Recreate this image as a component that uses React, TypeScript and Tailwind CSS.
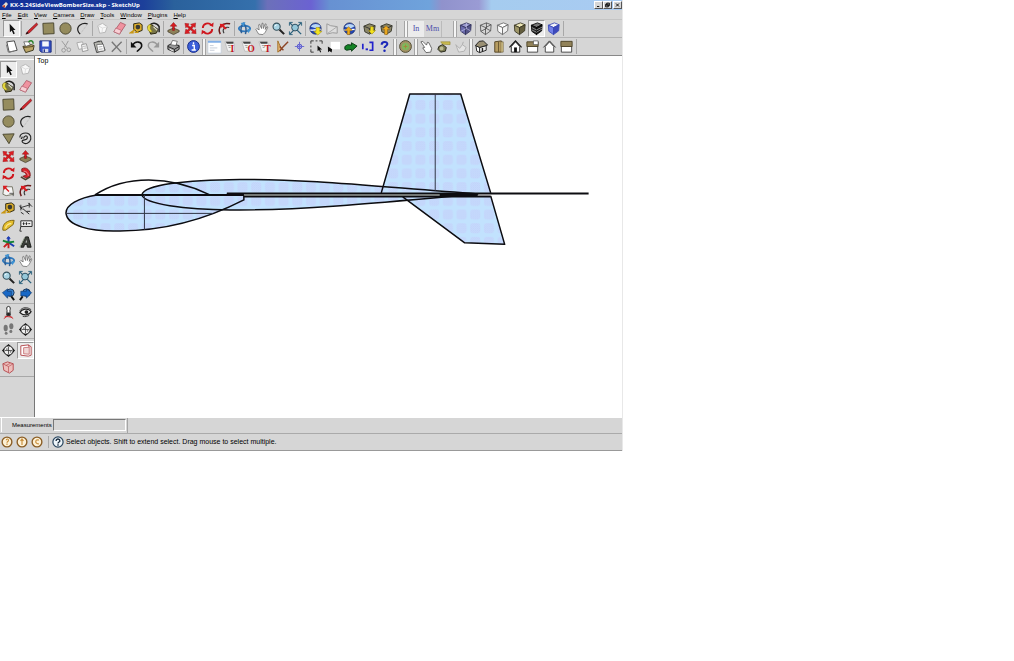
import type { ReactNode } from "react";
import clsx from "clsx";

// every icon is drawn on a 16 x 16 grid
const cube = (top: string, left: string, right: string, line: string) => (
	<g stroke={line} strokeWidth=".9" strokeLinejoin="round">
		<path d="M2.500 4.500 9 2l5 2-6 3z" fill={top} />
		<path d="M2.500 4.500 8 7v7.500L3 11z" fill={left} />
		<path d="M14 4 8 7v7.500l5.500-4z" fill={right} />
	</g>
);
const compass = (
	<>
		<path d="M8 1 15 8l-7 7-7-7z" fill="#111" />
		<circle cx="8" cy="8" r="5" fill="#eee" stroke="#111" />
		<path d="M8 4v8M4 8h8" stroke="#333" strokeWidth=".8" />
		<path d="M5.500 6.500h1.500M9.500 9.500h1.500" stroke="#333" />
	</>
);
const sheetLetter = (letter: string) => (
	<>
		<path d="M1 3h9l1 3v7H4z" fill="#f4f4f4" stroke="#aaa" strokeWidth=".6" />
		<path d="M2 3h8v2H3z" fill="#444" />
		<path d="M4 7h3M5 9h2" stroke="#888" strokeWidth=".8" />
		<text x="7" y="14" fontSize="10" fontWeight="bold" fill="#c4141c" fontFamily="Liberation Serif, serif">
			{letter}
		</text>
	</>
);
const magnifier = (
	<>
		<path d="m9 9 5 5" stroke="#222" strokeWidth="2.200" />
		<circle cx="6" cy="6" r="3.800" fill="#a9d4e4" stroke="#33505c" strokeWidth="1.200" />
		<path d="M4 5.500 6 4" stroke="#fff" />
	</>
);
const barrel = (
	<>
		<path d="M2 5.500 8 3l6 2-1 6-5 3-5-2.500z" fill="#8a8568" stroke="#3a3a2c" />
		<path d="M2 5.500 8 8l6-3M8 8v5" stroke="#333" fill="none" />
	</>
);
const globe = (
	<>
		<circle cx="8" cy="8" r="6" fill="#2347b8" stroke="#17285e" strokeWidth=".8" />
		<path d="M3 6c3-4 8-3 10.500-.5L9 8z" fill="#b9d7f5" />
		<path d="M2.500 9.500c4 1 8-1 11-.5" stroke="#fff" strokeWidth="1.500" fill="none" />
	</>
);

const icons: Record<string, ReactNode> = {
	select: <path d="m6 3 .3 9 2-2 1.700 4 1.500-.7-1.700-3.800h2.500z" fill="#111" />,
	pencil: (
		<>
			<path d="m13.500 2-9 8.500L2 14l4-1.500 8.500-8.500z" fill="#d3262c" stroke="#6d1115" strokeWidth=".7" />
			<path d="m2 14 1.200-2.500L5 13z" fill="#111" />
		</>
	),
	square: <path d="M2 2.500 13.500 2l.5 11.500L2.500 14z" fill="#958c5e" stroke="#4a4630" />,
	circle: <circle cx="8" cy="8" r="6" fill="#958c5e" stroke="#4a4630" />,
	triangle: <path d="M2 3.500 14 3 8.500 13.500z" fill="#958c5e" stroke="#4a4630" />,
	arc: (
		<>
			<path d="M13.500 3C7 1.500 2 5.500 3 10c.3 1.500 1 2.500 2.500 4" fill="none" stroke="#222" strokeWidth="1.300" />
			<path d="M13.500 3 5.500 14" stroke="#999" strokeWidth=".6" strokeDasharray="1 1" />
		</>
	),
	freehand: (
		<path
			d="M2 7C2 2 9 1 12 3.500s2 8-2 9.500-7-2-5-3 5 0 5-3-4-2-4 1M3 8c1 0 2-1 1-2"
			fill="none"
			stroke="#222"
			strokeWidth="1.200"
		/>
	),
	component: (
		<>
			<path d="m3 5 5-2.500L13 6l-2 6-6 1z" fill="#f8f8f8" stroke="#aaa" strokeWidth=".8" />
			<path d="m3 5 5 2.500 5-1.500M8 7.500 7.500 12" fill="none" stroke="#ddd" />
		</>
	),
	eraser: (
		<>
			<path d="M9 1.500 14.500 4 8 14l-6-2.500z" fill="#f0929f" stroke="#a44f5c" strokeWidth=".8" />
			<path d="m2 11.500 2-4 6 2.500L8 14z" fill="#f8cfd4" stroke="#a44f5c" strokeWidth=".6" />
		</>
	),
	tape: (
		<>
			<path d="m5 3 6-1 3 2v6l-5 2-4-3z" fill="#dcae2c" stroke="#2c2714" />
			<circle cx="9.500" cy="6.500" r="2.500" fill="#3b3b32" />
			<path d="M6 9.500 2 12.500h3M10 12H6" stroke="#c99713" strokeWidth="1.800" fill="none" />
		</>
	),
	paint: (
		<>
			<path d="M2 6 6 4l7 5-2 4-6 1z" fill="#77744a" stroke="#28230c" />
			<path d="M4 5c2-4 8-3 10 1v6" fill="none" stroke="#222" strokeWidth="1.600" />
			<path d="M3 4c-3 3-1 7 2 8l2-1C4 9 4 6 6 4z" fill="#e6d83e" stroke="#6f6618" strokeWidth=".5" />
			<path d="m8 6 4 4" stroke="#d9d9c8" strokeWidth="1.500" />
		</>
	),
	push: (
		<>
			<path d="m2 10 6-2.500 6 2.500v1.500L8 14.500l-6-3z" fill="#8d8159" stroke="#403a27" strokeWidth=".8" />
			<path d="M8 1.500 11.500 5.500H9V10H7V5.500H4.500z" fill="#d91b20" stroke="#7f0c10" strokeWidth=".5" />
		</>
	),
	// four arrows pointing away from the middle, turned a little
	move: (
		<g fill="#dc1d23" stroke="#8d1216" strokeWidth=".4">
			<path d="m2 2.500 4.500.5-1 1.500L8 7 7 8.500 4 6 3 7.500z" />
			<path d="m13.500 2-.5 5-1.500-1.200L8.500 9 7 7.500l2.500-3L8 3.500z" />
			<path d="m14 13.500-5-.5 1.200-1.500L7.500 8.500 9 7.500l3 2.500 1.500-1.500z" />
			<path d="m2 13.500 1-5 1.500 1.200L7.500 7 9 8.500l-3 3L7.500 13z" />
		</g>
	),
	rotate: (
		<>
			<path d="M3 7.500c0-5 6.500-6.500 9-3M13 8.500c0 5-6.500 6.500-9 3" fill="none" stroke="#cf161d" strokeWidth="2" />
			<path d="m14.500 1.500-.5 5-4-2zM1.500 14.500l.5-5 4 2z" fill="#cf161d" />
		</>
	),
	followMe: (
		<>
			<path d="M4 3c5-3 10 2 9 8l-4 2-4-2 4-1.500C8 7 6 6 4 6z" fill="#d9232a" stroke="#71171a" strokeWidth=".8" />
			<path d="M6 5.500c3 0 5 2 5 5" fill="none" stroke="#f0b0b0" strokeWidth=".8" />
			<path d="m3 11.500 5 3 5-3" fill="none" stroke="#4e3f2c" strokeWidth="1.500" />
		</>
	),
	scale: (
		<>
			<path d="M3 4h9l1.500 8-8 1.500L2 12z" fill="#f4f4f4" stroke="#665" strokeWidth=".9" />
			<path d="M2 3h5L5.500 5 9 8.500 8 9.500 4.500 6 3 7.500z" fill="#d91b20" />
			<path d="M9 11h4v3" stroke="#555" fill="none" />
		</>
	),
	offset: (
		<>
			<path d="M3.500 14C0 7 5 1 14 3" fill="none" stroke="#6a1a1a" strokeWidth="1.600" />
			<path d="M7.500 13C5 9 8 6 13 7" fill="none" stroke="#333" strokeWidth="1.100" />
			<path d="m3 3 6 .5L7.500 5l3 3-2 1-3-3L4 8z" fill="#d91b20" />
		</>
	),
	orbit: (
		<>
			<ellipse cx="8" cy="8" rx="6" ry="3" fill="none" stroke="#2f78bd" strokeWidth="2" />
			<path d="M5 13C3 9 5 4 7 2.500 10 6 10 11 9 14" fill="none" stroke="#2c5f96" strokeWidth="1.600" />
			<path d="m9 1-5 1 3 4zM11 8l4 1-3 4z" fill="#3f92d2" />
		</>
	),
	pan: (
		<path
			d="M5 14 2 9l1-1 2.500 1.500L5 4l1-.5L8 8l.5-5.500 1-.3L10 8l2-5 1 .3L12 9l2-3 .8.600L12 12l-2.500 2.500z"
			fill="#fff"
			stroke="#555"
			strokeWidth=".7"
		/>
	),
	zoom: magnifier,
	extents: (
		<>
			<path d="m2 2 12 12M14 2 2 14" stroke="#2d627d" strokeWidth="1.500" />
			<circle cx="7.500" cy="7" r="3.600" fill="#96c8da" stroke="#29495b" />
			<path d="M1.500 5V1.500H5M11 1.500h3.500V5M1.500 11v3.500H5" fill="none" stroke="#2d627d" />
		</>
	),
	zoomPrev: (
		<>
			<circle cx="10" cy="6" r="4" fill="#3b83d0" stroke="#173356" />
			<path d="M1.500 6 7 2v2.500h4v5H7V12z" fill="#1868c6" stroke="#123a6c" strokeWidth=".7" />
			<path d="m11 10 3 4" stroke="#111" strokeWidth="2" />
		</>
	),
	zoomNext: (
		<>
			<circle cx="9" cy="6" r="4" fill="#3b83d0" stroke="#173356" />
			<path d="M14.500 6 9 2v2.500H3v5h6V12z" fill="#1868c6" stroke="#123a6c" strokeWidth=".7" />
			<path d="m5 10-3 4" stroke="#111" strokeWidth="2" />
		</>
	),
	getView: (
		<>
			{globe}
			<path d="M8.500 7h4v4H15l-4.500 4L6 11h2.500z" fill="#f2e21d" stroke="#a18b0c" strokeWidth=".5" />
		</>
	),
	terrain: (
		<>
			<path d="m2 3 4 2 7 1v7l-5-.5L2 14z" fill="#ddd" stroke="#999" />
			<path d="M13 6 3 13" stroke="#aaa" />
		</>
	),
	placeModel: (
		<>
			{globe}
			<path d="M5.500 14.500V10H3l4-4 4 4H8.500v4.500z" fill="#eba91c" stroke="#85570b" strokeWidth=".5" />
		</>
	),
	getModels: (
		<>
			{barrel}
			<path d="M9 6h3v4h2.500L10.500 14 7 10h2z" fill="#f3e11b" stroke="#94810a" strokeWidth=".5" />
		</>
	),
	shareModels: (
		<>
			{barrel}
			<path d="M6 14.500V9H3.500L7.500 5l4 4H9v5.500z" fill="#efab1f" stroke="#85570b" strokeWidth=".5" />
		</>
	),
	xray: (
		<>
			{cube("#9c9cd0", "#6c6cae", "#55558a", "#32325c")}
			<path d="M9 2v6l4.500 2.500M9 8l-6 3" fill="none" stroke="#c4c4ea" strokeWidth=".7" />
		</>
	),
	wire: (
		<path
			d="M2.500 4.500 9 2l5 2-6 3zM2.500 4.500 3 11l5 3.500V7M14 4l-.5 6.500L8 14.500M9 2v6l4.500 2.500M9 8l-6 3"
			fill="none"
			stroke="#444"
			strokeWidth=".8"
		/>
	),
	hidden: cube("#fff", "#fafafa", "#f0f0f0", "#666"),
	shaded: cube("#ece6b6", "#9d9567", "#635d3e", "#35321f"),
	textured: (
		<>
			{cube("#777", "#222", "#111", "#000")}
			<path d="m3 7 5 2.500 6-3M3 9.500 8 12l6-3.500" fill="none" stroke="#aaa" strokeWidth=".8" />
		</>
	),
	mono: cube("#f3f3f8", "#7280e8", "#3d49bc", "#3647b5"),
	newFile: (
		<>
			<path d="M3 3 11 2l3 10-8.500 2z" fill="#fff" stroke="#333" strokeWidth=".9" />
			<path d="m2.500 6 2 8 6-1" fill="none" stroke="#777" />
		</>
	),
	open: (
		<>
			<path d="m2 8 9-2 3 1-1 5-8 2.500z" fill="#bba568" stroke="#3b351d" />
			<path d="M3 3h5l2 3-5 2z" fill="#fff" stroke="#444" strokeWidth=".7" />
			<path d="M8 3c3-2 5-1 5 2" stroke="#258025" fill="none" strokeWidth="1.500" />
			<path d="m3 9 10-1" stroke="#53451c" />
		</>
	),
	save: (
		<>
			<path d="M2 2h12v12H3.500L2 12.500z" fill="#3652c8" stroke="#1c2c7c" />
			<path d="M4.500 2.500h7V8h-7z" fill="#f4f6fb" />
			<path d="M5 10.500h6V14H5z" fill="#d9dcec" />
			<path d="M6 11h1.500v3H6z" fill="#243584" />
		</>
	),
	cut: (
		<>
			<path d="m4 2 6 8M11 2 7 9" stroke="#999" fill="none" />
			<circle cx="6" cy="12" r="2" fill="none" stroke="#999" />
			<circle cx="11.500" cy="11.500" r="2" fill="none" stroke="#999" />
		</>
	),
	copy: (
		<>
			<path d="m2 4 6-1 2 7-6 1z" fill="#f5f5f5" stroke="#aaa" />
			<path d="m7 6 5-1 2 7-6 1.500z" fill="#f5f5f5" stroke="#999" />
			<path d="m8 8 4-.5M9 10l3.500-.5" stroke="#bbb" />
		</>
	),
	paste: (
		<>
			<path d="m2 4 8-2 4 10-9 2.500z" fill="#b9b9b2" stroke="#444" />
			<path d="m5 6 7-.5 1.500 7-7 1z" fill="#fff" stroke="#555" strokeWidth=".7" />
			<path d="M7 8.500 11 8M7.500 11l4-.5" stroke="#999" strokeWidth=".8" />
			<path d="m4.500 3 3-1.500 1 2z" fill="#444" />
		</>
	),
	remove: <path d="m3 3 10 11M13.500 3 3 13.500" stroke="#777" strokeWidth="1.500" />,
	undo: (
		<>
			<path d="M3.500 7C7 1 14 3 13.500 7.500 13 11 10 11 8.500 13.500" fill="none" stroke="#111" strokeWidth="1.700" />
			<path d="M2 3v6h6z" fill="#111" />
		</>
	),
	redo: (
		<>
			<path d="M12.500 7C9 1 2 3 2.500 7.500 3 11 6 11 7.500 13.500" fill="none" stroke="#999" strokeWidth="1.500" />
			<path d="M14 3v6H8z" fill="#999" />
		</>
	),
	print: (
		<>
			<path d="m2 7 4-2 8 2v4l-5 3-7-3z" fill="#999" stroke="#222" />
			<path d="m5 6 2-4.500 5 1L10.500 7z" fill="#fff" stroke="#444" strokeWidth=".7" />
			<path d="m2 8 7 3 5-3M9 11v3" fill="none" stroke="#222" />
			<path d="m4 11 4 2" stroke="#fff" />
		</>
	),
	info: (
		<>
			<circle cx="8" cy="8" r="6.300" fill="#3b5fd9" stroke="#162a83" />
			<path d="M6.500 7h2.300v4.500M6 11.800h4.500M8 3.500v2" stroke="#fff" strokeWidth="1.500" fill="none" />
		</>
	),
	page: (
		<>
			<path d="M1 2h14v13H1z" fill="#fff" stroke="#bccbdd" strokeWidth=".6" />
			<path d="M1 2h14v2H1z" fill="#82afe6" />
			<path d="M3 7h4M3 9.500h8M3 12h5" stroke="#c4ccd8" />
		</>
	),
	textI: sheetLetter("I"),
	textO: sheetLetter("O"),
	textT: sheetLetter("T"),
	sketch: (
		<>
			<path d="M3 2v12l4-3z" fill="#e4b977" stroke="#a37127" />
			<path d="m14 3-6 6-3 4M5 8l4 4" stroke="#8c4425" strokeWidth="1.500" fill="none" />
		</>
	),
	target: (
		<>
			<circle cx="8" cy="8" r="2.500" fill="#a6a6ee" stroke="#5a5ac8" />
			<path d="M8 3v10M3 8h10" stroke="#6a6ad0" />
		</>
	),
	marquee: (
		<>
			<path d="M2 5V2h3M11 2h3v3M2 11v3h3M7 2h2M2 7v2" stroke="#333" fill="none" />
			<path d="m9 7 .2 6 1.500-1.300 1.300 2.800 1-.6-1.200-2.700H14z" fill="#111" />
		</>
	),
	whiteSel: (
		<>
			<path d="M5 3h10v8H5z" fill="#fff" />
			<path d="m2 8 .2 6 1.500-1.300 2.300 1.800.5-3.500z" fill="#111" />
		</>
	),
	greenArrow: <path d="m2 8 3-2 4 .5V4l6 3.500L9 13v-2l-5 1-2-1z" fill="#148326" stroke="#0b3713" />,
	brackets: (
		<>
			<path d="M3 5v6M10 3.500h3.500V12H10" fill="none" stroke="#2424cc" strokeWidth="1.800" />
			<path d="M6 11h2.500" stroke="#2424cc" strokeWidth="2" />
		</>
	),
	help: (
		<>
			<path d="M5 6c0-4 6.500-3.500 6-.5-.3 2-3 2-3 4" fill="none" stroke="#1b27b8" strokeWidth="2.200" />
			<circle cx="8" cy="12.500" r="1.300" fill="#1b27b8" />
		</>
	),
	ring: (
		<>
			<circle cx="8" cy="8" r="6.300" fill="#a09263" stroke="#504b33" />
			<circle cx="8" cy="8" r="3.800" fill="#7eb85b" />
			<path d="M8 6v4M6 8h4" stroke="#a5843c" />
		</>
	),
	pointing: <path d="m2 3 2-.5 4 4 1-3 1.500.5 3 6-1 4-5 .5L4 9.500l2-.5z" fill="#fff" stroke="#444" strokeWidth=".8" />,
	brush: (
		<>
			<path d="M5 3h10v3l-8-.5z" fill="#ccbd51" stroke="#8d812c" strokeWidth=".6" />
			<path d="m3 8 4-2 4 3-1 4-5 1-3-3z" fill="#7c7b53" stroke="#25251b" />
			<circle cx="6" cy="10" r="2" fill="#bdbd94" />
		</>
	),
	ghost: (
		<>
			<path d="m3 6 4 4 3-4 4 3-2 4-6 1z" fill="#e4e4e4" stroke="#b0b0b0" />
			<path d="m10 6 1-3" stroke="#aaa" />
		</>
	),
	iso: (
		<>
			<path d="m2 7 4 2v5.500L3 13z" fill="#fff" stroke="#222" />
			<path d="m6 9 7-2v5l-7 2.500z" fill="#eee" stroke="#222" />
			<path d="m1.500 7 4-4.500L10 2l4.500 4.500L6 9z" fill="#9a9074" stroke="#222" />
			<path d="M9 9.500v4" stroke="#222" strokeWidth="1.500" />
		</>
	),
	top: (
		<>
			<path d="m4 3 7-1v12H4z" fill="#b69c61" stroke="#544525" />
			<path d="M8 3v11" stroke="#695630" />
			<path d="M11 3h2v11h-2" fill="#dac88c" stroke="#544525" strokeWidth=".6" />
		</>
	),
	front: (
		<>
			<path d="M3.500 8v6h9V8L8 3z" fill="#fff" stroke="#222" />
			<path d="m1.500 9 6.500-7 6.500 7" fill="none" stroke="#111" strokeWidth="1.200" />
			<path d="M6.500 9h3v5h-3z" fill="#111" />
		</>
	),
	right: (
		<>
			<path d="M2.500 7.500h11V14h-11z" fill="#fff" stroke="#444" />
			<path d="M2 3h12v5H2z" fill="#918259" stroke="#4e4429" />
			<path d="M9 2h5v4H9z" fill="#fff" stroke="#444" strokeWidth=".7" />
		</>
	),
	back: (
		<>
			<path d="M3.500 8v6h9V8L8 3z" fill="#fff" stroke="#444" />
			<path d="m1.500 9 6.500-7 6.500 7" fill="none" stroke="#333" />
		</>
	),
	left: (
		<>
			<path d="M2.500 7.500h11V14h-11z" fill="#fff" stroke="#444" />
			<path d="M2 2.500h12V8H2z" fill="#918259" stroke="#4e4429" />
		</>
	),
	dimension: (
		<>
			<path d="m3 7 10-3M3 4v6M12 2v5" fill="none" stroke="#333" />
			<path d="m1.500 5 3 4M11 2l4 4M5 8l7 6M9 11h4M3 12l3 2" stroke="#222" />
		</>
	),
	protractor: (
		<>
			<path d="M2 13C1 6 7 2 14 2.500L13 7 5 13z" fill="#e6bf2d" stroke="#7d6412" />
			<path d="M5 11c0-3 3-5 6-5" fill="none" stroke="#f9eba2" strokeWidth="1.200" />
		</>
	),
	label: (
		<>
			<path d="M3 3h12v6H3zM3 9l-1 5h2" fill="#f4f4f4" stroke="#222" />
			<path d="M5 6h2M8 6h2M11 6h2M6 4.500v3M9 4.500v3" stroke="#222" />
		</>
	),
	axes: (
		<>
			<path d="M8 8V2M8 8l6 4" stroke="#1d3db4" strokeWidth="2.200" />
			<path d="m8 8-5 5M8 8v6" stroke="#c8201f" strokeWidth="2" />
			<path d="m8 8 6-1M8 8 2 6" stroke="#158335" strokeWidth="2" />
			<path d="m5.500 4 2.500-3 2.500 3z" fill="#1d3db4" />
		</>
	),
	text3d: (
		<>
			<path d="m3 13 5-11h3l3 11h-4l-.5-3H7l-1 3z" fill="#3e423c" stroke="#171a17" />
			<path d="M8 8h1.500L9 5z" fill="#ddd" />
			<path d="m2 13 5-10" stroke="#88967f" />
		</>
	),
	camera: (
		<>
			<path d="M3 14.500 8 11l5 3.500M4 12l8 1" stroke="#c9292d" fill="none" />
			<path d="M8 1.500c2.500 0 2 3 1.500 4.500l.5 5H6l.5-5C6 4.500 5.500 1.500 8 1.500z" fill="#fff" stroke="#222" />
			<path d="M6.500 8h3v3h-3z" fill="#222" />
		</>
	),
	look: (
		<>
			<path d="M2 8c2-4 9-5 12-1-2 4-8 5-12 1z" fill="#f3f3f3" stroke="#222" strokeWidth="1.300" />
			<circle cx="9" cy="7.500" r="2" fill="#222" />
			<path d="M2 6c3-4 8-4 12-1M5 12c3 1 5 0 7-1" fill="none" stroke="#333" />
		</>
	),
	walk: (
		<g fill="#777">
			<ellipse cx="5" cy="6.500" rx="2.200" ry="3.500" />
			<ellipse cx="5.500" cy="12" rx="1.500" ry="1.700" />
			<ellipse cx="11" cy="4.500" rx="2.200" ry="3.200" />
			<ellipse cx="10.500" cy="10" rx="1.600" ry="1.700" />
		</g>
	),
	compass,
	sectionPlane: (
		<>
			<path d="m3 3 8-1 3 2v9l-3 1-8-1z" fill="#fff" stroke="#b54b4f" />
			<path d="m6 5 6-.5V12l-6-.5z" fill="#f1d7d6" stroke="#b54b4f" strokeWidth=".7" />
			<path d="m11 2 1 2.500" stroke="#b54b4f" />
		</>
	),
	sectionCut: (
		<>
			<path d="m2 4 5-2 6 2v7l-4 3-6-3z" fill="#edbfbc" stroke="#b54b4f" />
			<path d="m2 4 6 3 5-3M8 7v6M5 6l5-2.500" fill="none" stroke="#b54b4f" strokeWidth=".7" />
		</>
	),
};

interface ToolProps {
	name: string;
	active?: boolean;
}
function Tool({ name, active }: ToolProps) {
	return (
		<button
			type="button"
			aria-label={name}
			className={clsx(
				"w-[17px] h-[17px] shrink-0 flex items-center justify-center",
				active && "bg-[#ececec] border border-t-[#999] border-l-[#999] border-b-white border-r-white",
			)}
		>
			<svg viewBox="0 0 16 16" className="w-[15px] h-[15px] shrink-0" fill="none">
				{icons[name]}
			</svg>
		</button>
	);
}

const Sep = () => <span className="w-px h-[15px] mx-px shrink-0 bg-[#a8a8a8]" />;
// raised handle between two docked toolbars
const Grip = () => <span className="w-1 h-4 shrink-0 border-x border-[#a5a5a5] bg-[#f5f5f5]" />;

function Tools({ names, active }: { names: string[]; active?: string }) {
	return (
		<>
			{names.map((name) => (
				<Tool key={name} name={name} active={name === active} />
			))}
		</>
	);
}

const menus = ["File", "Edit", "View", "Camera", "Draw", "Tools", "Window", "Plugins", "Help"];

const palette = [
	["select", "component", "paint", "eraser"],
	["square", "pencil", "circle", "arc", "triangle", "freehand"],
	["move", "push", "rotate", "followMe", "scale", "offset"],
	["tape", "dimension", "protractor", "label", "axes", "text3d"],
	["orbit", "pan", "zoom", "extents", "zoomPrev", "zoomNext"],
	["camera", "look", "walk", "compass"],
];

function TitleBar() {
	return (
		<header className="h-[10px] flex items-center bg-[linear-gradient(90deg,#14309a_0%,#1c3f9a_23%,#2a619c_28%,#3570ac_41%,#6c70ba_43%,#6b62d2_50%,#6791d2_53%,#6fa3dc_69%,#9092cc_71%,#9a9bd4_77%,#a5ccef_79%,#a9cbf2_100%)]">
			<svg viewBox="0 0 8 8" className="w-2 h-2 mx-px shrink-0">
				<path d="m1 5 4-4 2 2-3 4z" fill="#e8ddd0" />
				<path d="m1 5 3-1v3z" fill="#c83d20" />
			</svg>
			<h1 className="flex-1 whitespace-nowrap text-white font-bold text-[6px] leading-[10px] font-['Open_Sans',sans-serif]">
				KX-5.24SideViewBomberSize.skp - SketchUp
			</h1>
			<div className="flex">
				{["M2 6h3", "M3 1.500h3.500V5H3zM1.500 3H5v3.500H1.500z", "m2 2 4 4M6 2 2 6"].map((d, i) => (
					<button
						key={d}
						type="button"
						aria-label={["Minimize", "Restore", "Close"][i]}
						className="w-[9px] h-2 bg-[#d6d6d6] border border-t-white border-l-white border-b-[#555] border-r-[#555] last:ml-px"
					>
						<svg viewBox="0 0 8 8" className="w-[7px] h-[6px]" fill="none" stroke="#000" strokeWidth="1.200">
							<path d={d} />
						</svg>
					</button>
				))}
			</div>
		</header>
	);
}

function Drawing() {
	return (
		<svg viewBox="35 56 587 361" preserveAspectRatio="xMinYMin meet" className="w-full block" fill="none">
			<defs>
				<pattern id="dots" width="2" height="2" patternUnits="userSpaceOnUse">
					<path d="M0 0h1v1H0zM1 1h1v1H1z" fill="#bcc4f6" />
				</pattern>
				<pattern id="face" x="401" y="99" width="13.700" height="13.700" patternUnits="userSpaceOnUse">
					<path d="M0 0h14v14H0z" fill="#c2e2fe" />
					<rect x="1" y="1" width="10" height="10" rx="3" fill="#c6dcfd" />
					<rect x="1" y="1" width="10" height="10" rx="3" fill="url(#dots)" opacity=".4" />
				</pattern>
			</defs>
			<g fill="url(#face)">
				<path d="M410 94H461L491 193H381z" />
				<path d="M403 197 465 243 505 244.500 491 196z" />
				<path d="M97 195C78 198 66 205 66 213 67 226 90 232 120 231 165 231 207 219 244 201V195z" />
				<path d="M142 195C144 185 185 180 240 179.500 310 179 380 187 478 194 400 201 300 211 230 210 185 210 144 204 142 195z" />
			</g>
			<g stroke="#0c0c10" strokeWidth="1.500" strokeLinejoin="round">
				<path d="M381.500 193 410 94H461L491 193" />
				<path d="M403 197 465 243 505 244.500 491 196" />
				<path d="M97 195C78 198 66 205 66 213 67 226 90 232 120 231 165 231 207 219 244 200V195" />
				<path d="M142 195C144 185 185 180 240 179.500 310 179 380 187 478 194 400 201 300 211 230 210 185 210 144 204 142 195z" />
				<path d="M95 195C125 175 170 175 210 195" />
				<path d="M95 195H244M244 196.500H491" strokeWidth="2" />
				<path d="M227 193.500H589" strokeWidth="2" />
				<path d="M244 195H440" stroke="#77776f" strokeWidth="1.500" />
				<path d="M227 194.500H244M440 195H478" strokeWidth="3" />
			</g>
			<path d="M66 213.500H213M144.500 195V230M435.500 94V191" stroke="#303545" />
		</svg>
	);
}

export default function App() {
	return (
		<div className="min-h-screen bg-white">
			<main className="w-[61.4%] min-w-[600px] bg-[#d6d6d6] border-r border-[#e8e8e8] text-black text-[6px] font-['Liberation_Sans',sans-serif]">
				<TitleBar />
				<nav className="h-[10px] flex items-center gap-[6px] pl-[2px] border-b border-[#c4c4c4]">
					{menus.map((menu) => (
						<button key={menu} type="button" className="leading-[10px] first-letter:underline">
							{menu}
						</button>
					))}
				</nav>
				<div className="h-[18px] flex items-center pl-[3px] border-b border-[#b4b4b4]">
					<Tool name="select" active />
					<Sep />
					<Tools names={["pencil", "square", "circle", "arc"]} />
					<Sep />
					<Tools names={["component", "eraser", "tape", "paint"]} />
					<Sep />
					<Tools names={["push", "move", "rotate", "offset"]} />
					<Sep />
					<Tools names={["orbit", "pan", "zoom", "extents"]} />
					<Sep />
					<Tools names={["getView", "terrain", "placeModel"]} />
					<Sep />
					<Tools names={["getModels", "shareModels"]} />
					<Sep />
					<span className="w-[6px]" />
					<Grip />
					<div className="flex h-4 font-['Liberation_Serif',serif] text-[8px] text-[#4c4caa]">
						<button type="button" className="w-4 bg-[#ececec]">
							In
						</button>
						<button type="button" className="w-[18px] border-r border-[#bbb]">
							Mm
						</button>
					</div>
					<span className="w-[11px]" />
					<Grip />
					<Tool name="xray" />
					<Sep />
					<Tools names={["wire", "hidden", "shaded", "textured", "mono"]} active="textured" />
					<Sep />
				</div>
				<div className="h-[18px] flex items-center pl-[3px] border-b border-[#888]">
					<Tools names={["newFile", "open", "save"]} />
					<Sep />
					<Tools names={["cut", "copy", "paste", "remove"]} />
					<Sep />
					<Tools names={["undo", "redo"]} />
					<Sep />
					<Tool name="print" />
					<Sep />
					<Tool name="info" />
					<Grip />
					<Tools
						names={["page", "textI", "textO", "textT", "sketch", "target", "marquee", "whiteSel", "greenArrow", "brackets", "help"]}
					/>
					<Grip />
					<Tool name="ring" />
					<Grip />
					<Tools names={["pointing", "brush", "ghost"]} />
					<Grip />
					<Tools names={["iso", "top", "front", "right", "back", "left"]} />
					<Sep />
				</div>
				<div className="flex">
					<aside className="w-[35px] shrink-0 border-r border-[#777]">
						<div className="h-1 mb-px border-b border-white" />
						{palette.map((group) => (
							<div key={group[0]} className="grid grid-cols-2 border-b border-[#b0b0b0]">
								<Tools names={group} active="select" />
							</div>
						))}
						<div className="h-[3px] border-b border-white" />
						<div className="grid grid-cols-2 border-b border-[#a8a8a8]">
							<Tools names={["compass", "sectionPlane", "sectionCut"]} active="sectionPlane" />
						</div>
					</aside>
					<section className="relative flex-1 bg-white">
						<p className="absolute left-[2px] top-0 text-[7px] leading-[10px]">Top</p>
						<Drawing />
					</section>
				</div>
				<div className="h-[17px] flex items-center border-t border-b border-t-white border-b-[#aaa]">
					<span className="w-px h-[14px] ml-px bg-white" />
					<label htmlFor="measurements" className="w-[50px] pl-[10px]">
						Measurements
					</label>
					<input
						id="measurements"
						className="w-[73px] h-3 ml-px bg-[#d6d6d6] border border-t-[#777] border-l-[#777] border-b-white border-r-white outline-none"
					/>
					<span className="w-px h-[15px] ml-px bg-[#a5a5a5]" />
				</div>
				<footer className="h-[17px] flex items-center border-b border-[#999] text-[7px]">
					{["M7 5.500c0-2 3-2 3 0S8 7 8 9M8 10v2", "M8 12V4M6 6.500 8 4l2 2.500", "M10.500 5.500c-5-2-6 5 0 5"].map((d) => (
						<svg key={d} viewBox="0 0 16 16" className="w-3 h-3 ml-px mr-[2px]" fill="none">
							<circle cx="8" cy="8" r="6.500" fill="#fdf1d6" stroke="#8a5d24" strokeWidth="1.800" />
							<path d={d} stroke="#c88d3a" strokeWidth="1.500" />
						</svg>
					))}
					<span className="w-px h-3 mx-[3px] bg-[#aaa]" />
					<svg viewBox="0 0 16 16" className="w-3 h-3 mr-[2px]" fill="none">
						<circle cx="8" cy="8" r="6.800" fill="#eef5fa" stroke="#27445e" strokeWidth="1.600" />
						<path d="M5.500 6.500c0-3.500 5-3 5 0C10.500 8 8 8 8 10M8 11v2" stroke="#15283c" strokeWidth="1.800" />
					</svg>
					<p>Select objects. Shift to extend select. Drag mouse to select multiple.</p>
				</footer>
			</main>
		</div>
	);
}
